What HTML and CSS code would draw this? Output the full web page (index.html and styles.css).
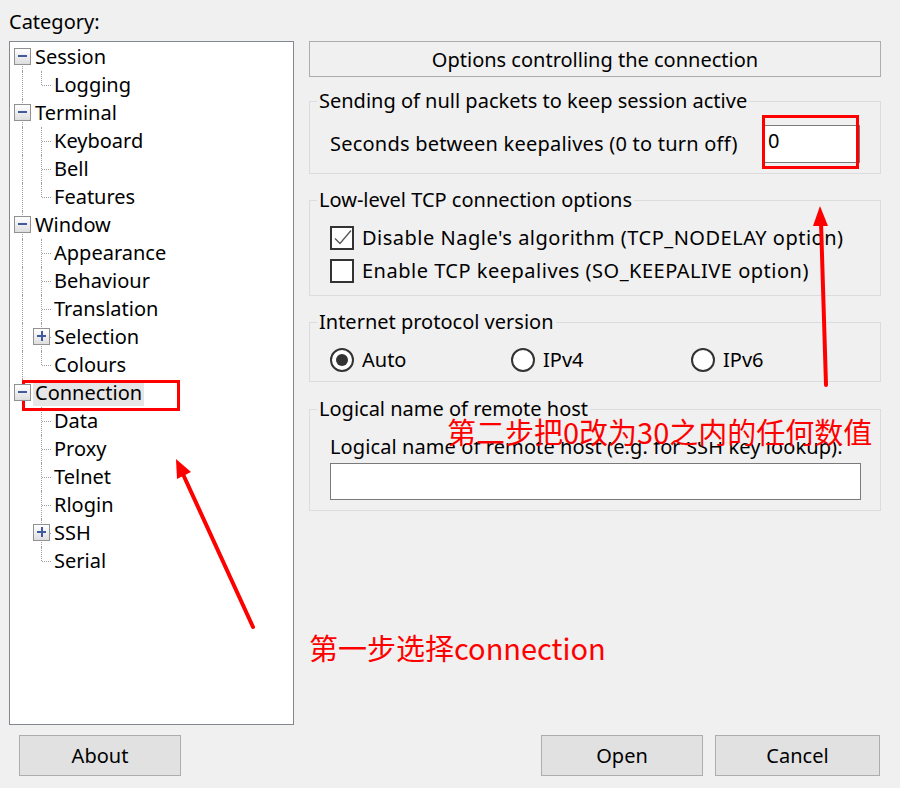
FILE: index.html
```html
<!DOCTYPE html>
<html lang="en">
<head>
<meta charset="utf-8">
<title>PuTTY Configuration - Connection</title>
<link rel="stylesheet" href="styles.css">
</head>
<body>
<div class="app">
  <div class="main">
    <div class="left">
      <div class="cat">Category:</div>
      <div class="tree">
        <div class="row"><span class="c first"><i class="box"></i></span><span class="t">Session</span></div>
        <div class="row"><span class="c vl"></span><span class="c ell"></span><span class="t">Logging</span></div>
        <div class="row"><span class="c mid"><i class="box"></i></span><span class="t">Terminal</span></div>
        <div class="row"><span class="c vl"></span><span class="c tee"></span><span class="t">Keyboard</span></div>
        <div class="row"><span class="c vl"></span><span class="c tee"></span><span class="t">Bell</span></div>
        <div class="row"><span class="c vl"></span><span class="c ell"></span><span class="t">Features</span></div>
        <div class="row"><span class="c mid"><i class="box"></i></span><span class="t">Window</span></div>
        <div class="row"><span class="c vl"></span><span class="c tee"></span><span class="t">Appearance</span></div>
        <div class="row"><span class="c vl"></span><span class="c tee"></span><span class="t">Behaviour</span></div>
        <div class="row"><span class="c vl"></span><span class="c tee"></span><span class="t">Translation</span></div>
        <div class="row"><span class="c vl"></span><span class="c tee"><i class="box plus"></i></span><span class="t">Selection</span></div>
        <div class="row"><span class="c vl"></span><span class="c ell"></span><span class="t">Colours</span></div>
        <div class="row"><span class="c lastv"><i class="box"></i></span><span class="t sel">Connection</span></div>
        <div class="row"><span class="c"></span><span class="c tee"></span><span class="t">Data</span></div>
        <div class="row"><span class="c"></span><span class="c tee"></span><span class="t">Proxy</span></div>
        <div class="row"><span class="c"></span><span class="c tee"></span><span class="t">Telnet</span></div>
        <div class="row"><span class="c"></span><span class="c tee"></span><span class="t">Rlogin</span></div>
        <div class="row"><span class="c"></span><span class="c tee"><i class="box plus"></i></span><span class="t">SSH</span></div>
        <div class="row"><span class="c"></span><span class="c ell"></span><span class="t">Serial</span></div>
      </div>
    </div>
    <div class="right">
      <div class="header">Options controlling the connection</div>
      <fieldset class="grp g1">
        <legend>Sending of null packets to keep session active</legend>
        <div class="kv">
          <span class="kvl">Seconds between keepalives (0 to turn off)</span>
          <div class="edit small">0</div>
        </div>
      </fieldset>
      <fieldset class="grp g2">
        <legend>Low-level TCP connection options</legend>
        <div class="checks">
          <div class="opt"><span class="chk"><svg width="20" height="20" viewBox="0 0 20 20"><path d="M3 10.5 L8 15.5 L19 2.5" fill="none" stroke="#5a5a5a" stroke-width="1.4"/></svg></span><span>Disable Nagle's algorithm (TCP_NODELAY option)</span></div>
          <div class="opt"><span class="chk"></span><span>Enable TCP keepalives (SO_KEEPALIVE option)</span></div>
        </div>
      </fieldset>
      <fieldset class="grp g3">
        <legend>Internet protocol version</legend>
        <div class="radios">
          <div class="opt"><span class="rad on"></span><span>Auto</span></div>
          <div class="opt"><span class="rad"></span><span>IPv4</span></div>
          <div class="opt"><span class="rad"></span><span>IPv6</span></div>
        </div>
      </fieldset>
      <fieldset class="grp g4">
        <legend>Logical name of remote host</legend>
        <div class="lh">
          <div class="lbl">Logical name of remote host (e.g. for SSH key lookup):</div>
          <div class="edit wide"></div>
        </div>
      </fieldset>
    </div>
  </div>
  <div class="buttons">
    <div class="btn about">About</div>
    <div class="spacer"></div>
    <div class="btn open">Open</div>
    <div class="btn cancel">Cancel</div>
  </div>

  <svg class="marks" width="900" height="788" viewBox="0 0 900 788">
    <rect x="23.5" y="381.5" width="155" height="28" fill="none" stroke="#ff0000" stroke-width="3"/>
    <rect x="763.5" y="116.5" width="94" height="51" fill="none" stroke="#ff0000" stroke-width="3"/>
    <line x1="253" y1="627" x2="182" y2="472" stroke="#ff0000" stroke-width="4" stroke-linecap="round"/>
    <polygon points="176,459 191,472 177,479" fill="#ff0000"/>
    <line x1="826" y1="385" x2="821" y2="222" stroke="#ff0000" stroke-width="4" stroke-linecap="round"/>
    <polygon points="820,206 828,226 813,226" fill="#ff0000"/>
  </svg>
  <div class="note n1">第一步选择connection</div>
  <div class="note n2">第二步把0改为30之内的任何数值</div>
</div>
</body>
</html>
```

FILE: styles.css
```css
html, body {
  margin: 0;
  padding: 0;
  background: #f0f0f0;
}

.app {
  position: relative;
  width: 900px;
  height: 788px;
  overflow: hidden;
  background: #f0f0f0;
  font-family: "Noto Sans", "Open Sans", sans-serif;
  font-size: 20px;
  color: #000;
}

.main {
  display: flex;
  gap: 15px;
  padding-left: 9px;
}

.left {
  width: 285px;
  flex: none;
}

.cat {
  height: 41px;
  box-sizing: border-box;
  padding-top: 12px;
  line-height: 20px;
}

.tree {
  height: 684px;
  box-sizing: border-box;
  border: 1px solid #828790;
  background: #fff;
  padding-top: 1px;
}

.row {
  display: flex;
  align-items: center;
  height: 28px;
  padding-left: 3px;
}

.c {
  position: relative;
  width: 19px;
  height: 28px;
  flex: none;
}

.vl::before,
.mid::before,
.tee::before,
.first::before,
.lastv::before,
.ell::before {
  content: "";
  position: absolute;
  left: 9px;
  border-left: 1px dotted #a0a0a0;
}

.vl::before,
.mid::before,
.tee::before {
  top: 0;
  bottom: 0;
}

.first::before {
  top: 14px;
  bottom: 0;
}

.lastv::before,
.ell::before {
  top: 0;
  height: 14px;
}

.tee::after,
.ell::after {
  content: "";
  position: absolute;
  left: 10px;
  width: 9px;
  top: 14px;
  border-top: 1px dotted #a0a0a0;
}

.box {
  position: absolute;
  left: 1px;
  top: 5px;
  width: 17px;
  height: 17px;
  box-sizing: border-box;
  border: 1px solid #919191;
  background: linear-gradient(#ffffff, #dedede);
  z-index: 1;
}

.box::before {
  content: "";
  position: absolute;
  left: 3px;
  top: 6px;
  width: 9px;
  height: 2px;
  background: #3f5b9e;
}

.box.plus::after {
  content: "";
  position: absolute;
  left: 7px;
  top: 2px;
  width: 2px;
  height: 10px;
  background: #3f5b9e;
}

.t {
  margin-left: 1px;
  padding: 0 2px;
  height: 25px;
  line-height: 23px;
  white-space: nowrap;
}

.t.sel {
  background: #e6e6e6;
}

.right {
  width: 572px;
  flex: none;
  padding-top: 41px;
}

.header {
  height: 36px;
  box-sizing: border-box;
  border: 1px solid #adadad;
  text-align: center;
  line-height: 35px;
}

.grp {
  margin: 16px 0 0;
  padding: 0;
  border: 1px solid #dcdcdc;
  min-width: 0;
}

.grp legend {
  margin-left: 7px;
  padding: 0 2px;
  line-height: 20px;
}

.g1 {
  margin-top: 14px;
}

.g4 {
  margin-top: 17px;
}

.kv {
  display: flex;
  align-items: center;
  justify-content: space-between;
  padding: 14px 20px 10px 20px;
  line-height: 20px;
}

.kvl {
  letter-spacing: 0.22px;
}

.edit {
  box-sizing: border-box;
  background: #fff;
  border: 1px solid #7a7a7a;
}

.edit.small {
  width: 97px;
  height: 38px;
  padding: 5px 0 0 4px;
  line-height: 20px;
}

.checks {
  padding: 11px 20px 8px;
}

.checks .opt {
  letter-spacing: 0.5px;
}

.opt {
  display: flex;
  align-items: center;
  gap: 8px;
  height: 33px;
  line-height: 20px;
  white-space: nowrap;
}

.chk {
  width: 24px;
  height: 24px;
  box-sizing: border-box;
  border: 2px solid #333;
  background: #fff;
  flex: none;
}

.chk svg {
  display: block;
}

.radios {
  display: grid;
  grid-template-columns: 181px 180px auto;
  padding: 14px 20px 7px;
}

.radios .opt {
  height: 28px;
}

.rad {
  position: relative;
  width: 24px;
  height: 24px;
  box-sizing: border-box;
  border: 2px solid #333;
  border-radius: 50%;
  background: #fff;
  flex: none;
}

.rad.on::after {
  content: "";
  position: absolute;
  left: 4px;
  top: 4px;
  width: 12px;
  height: 12px;
  border-radius: 50%;
  background: #333;
}

.lh {
  padding: 18px 19px 10px 20px;
}

.lbl {
  line-height: 20px;
  white-space: nowrap;
  letter-spacing: 0.1px;
}

.edit.wide {
  margin-top: 6px;
  width: 531px;
  height: 37px;
}

.buttons {
  display: flex;
  margin-top: 10px;
  padding: 0 20px 0 19px;
}

.spacer {
  flex: 1;
}

.btn {
  width: 162px;
  height: 41px;
  box-sizing: border-box;
  border: 1px solid #adadad;
  background: #e1e1e1;
  text-align: center;
  line-height: 39px;
}

.btn.cancel {
  width: 165px;
  margin-left: 12px;
}

.marks {
  position: absolute;
  left: 0;
  top: 0;
  pointer-events: none;
}

.note {
  position: absolute;
  color: #ff0000;
  font-family: "Noto Sans CJK SC", "Noto Sans", sans-serif;
  font-size: 29px;
  white-space: nowrap;
}

.n1 {
  left: 309px;
  top: 632px;
  line-height: 30px;
}

.n2 {
  left: 447px;
  top: 421px;
  height: 21px;
  line-height: 21px;
  background: #f0f0f0;
}
```
